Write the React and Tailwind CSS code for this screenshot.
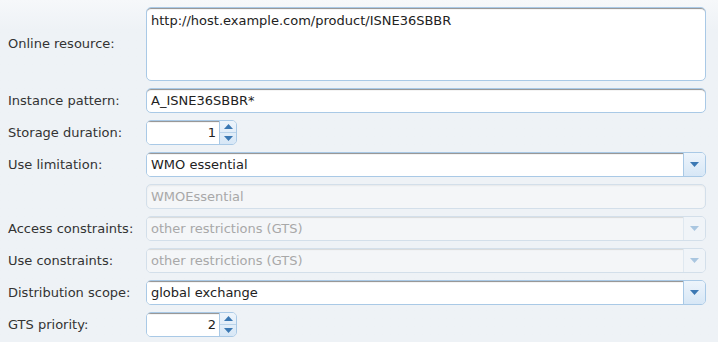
import React from 'react';

const font = { fontFamily: '"DejaVu Sans", Verdana, sans-serif' };

const Label = ({ children }) => (
  <div className="w-[138px] shrink-0 text-[13px] text-[#333]">{children}</div>
);

const Arrow = ({ up, light }) => (
  <svg width="9" height="5" viewBox="0 0 9 5" className="block">
    <path d={up ? 'M0 5 L4.5 0 L9 5 Z' : 'M0 0 L9 0 L4.5 5 Z'} fill={light ? '#a9c6e0' : '#3b78b3'} />
  </svg>
);

const TextInput = ({ value, disabled }) => (
  <div
    className={
      'flex-1 h-[25px] rounded-[5px] border flex items-center px-[4px] text-[13px] ' +
      (disabled
        ? 'bg-[#f4f6f8] border-[#d3dfea] text-[#a8a8a8] shadow-[inset_0_1px_2px_rgba(0,0,0,0.06)]'
        : 'bg-white border-[#a9c9e6] text-[#222] shadow-[inset_0_2px_1px_-1px_rgba(0,0,0,0.45)]')
    }
  >
    {value}
  </div>
);

const Select = ({ value, disabled }) => (
  <div
    className={
      'flex-1 h-[25px] rounded-[5px] border flex overflow-hidden text-[13px] ' +
      (disabled ? 'border-[#d3dfea] text-[#a8a8a8]' : 'border-[#a9c9e6] text-[#222]')
    }
  >
    <div
      className={
        'flex-1 flex items-center px-[4px] ' +
        (disabled
          ? 'bg-[#f4f6f8] shadow-[inset_0_2px_1px_-1px_rgba(0,0,0,0.12)]'
          : 'bg-white shadow-[inset_0_2px_1px_-1px_rgba(0,0,0,0.45)]')
      }
    >
      {value}
    </div>
    <div
      className={
        'w-[22px] border-l flex items-center justify-center ' +
        (disabled
          ? 'border-[#dfe8f0] bg-[#f0f4f8]'
          : 'border-[#a9c9e6] bg-gradient-to-b from-[#edf4fb] to-[#d7e7f6]')
      }
    >
      <Arrow light={disabled} />
    </div>
  </div>
);

const Spinner = ({ value }) => (
  <div className="w-[91px] h-[25px] rounded-[5px] border border-[#a9c9e6] flex overflow-hidden text-[13px] text-[#222]">
    <div className="flex-1 bg-white flex items-center justify-end pr-[3px] shadow-[inset_0_2px_1px_-1px_rgba(0,0,0,0.45)]">
      {value}
    </div>
    <div className="w-[17px] border-l border-[#a9c9e6] flex flex-col bg-gradient-to-b from-[#edf4fb] to-[#d7e7f6]">
      <div className="flex-1 flex items-center justify-center border-b border-[#b9d3ea]">
        <Arrow up />
      </div>
      <div className="flex-1 flex items-center justify-center">
        <Arrow />
      </div>
    </div>
  </div>
);

const rows = [
  { label: 'Instance pattern:', field: <TextInput value="A_ISNE36SBBR*" /> },
  { label: 'Storage duration:', field: <Spinner value="1" /> },
  { label: 'Use limitation:', field: <Select value="WMO essential" /> },
  { label: '', field: <TextInput value="WMOEssential" disabled /> },
  { label: 'Access constraints:', field: <Select value="other restrictions (GTS)" disabled /> },
  { label: 'Use constraints:', field: <Select value="other restrictions (GTS)" disabled /> },
  { label: 'Distribution scope:', field: <Select value="global exchange" /> },
  { label: 'GTS priority:', field: <Spinner value="2" /> },
];

export default function App() {
  return (
    <div
      style={font}
      className="w-[718px] h-[342px] overflow-hidden bg-gradient-to-b from-[#f6f8fa] to-[#eef2f6] to-[30px] pl-[8px] pr-[12px] pt-[7px] flex flex-col gap-[7px]"
    >
      <div className="flex items-center">
        <Label>Online resource:</Label>
        <div className="flex-1 h-[74px] rounded-[5px] border border-[#a9c9e6] bg-white shadow-[inset_0_2px_1px_-1px_rgba(0,0,0,0.45)] px-[4px] pt-[3px] text-[13px] text-[#222]">
          http://host.example.com/product/ISNE36SBBR
        </div>
      </div>
      {rows.map((r, i) => (
        <div key={i} className="flex items-center">
          <Label>{r.label}</Label>
          {r.field}
        </div>
      ))}
    </div>
  );
}
